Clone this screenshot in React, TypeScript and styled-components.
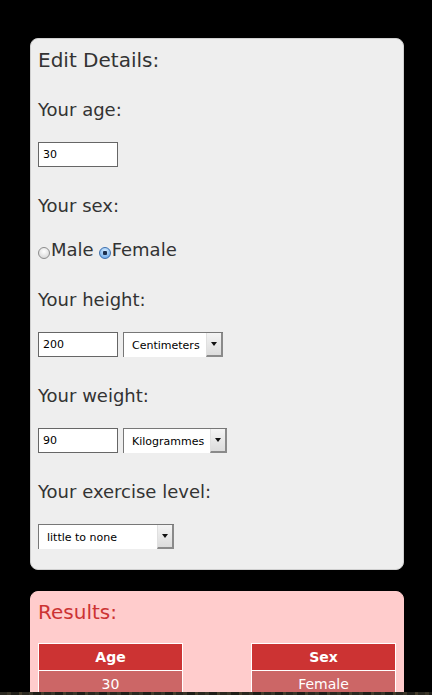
import styled, { createGlobalStyle } from "styled-components";

const GlobalStyle = createGlobalStyle`
  body {
    margin: 0;
    background: #000;
    font-family: "DejaVu Sans", Verdana, sans-serif;
  }
`

const Page = styled.div`
  padding: 38px 0 40px 30px;
  display: flex;
  flex-direction: column;
  gap: 21px;
`

const Card = styled.div<{ $tone: "grey" | "pink" }>`
  width: 374px;
  box-sizing: border-box;
  border-radius: 8px;
  background: ${(p) => (p.$tone === "grey" ? "#eeeeee" : "#ffcccc")};
  border: 1px solid ${(p) => (p.$tone === "grey" ? "#cfcfcf" : "#ffcccc")};
  padding: ${(p) => (p.$tone === "grey" ? "9px 7px 20px 7px" : "8px 7px 19px 7px")};
`

const CardTitle = styled.h2<{ $red?: boolean }>`
  margin: 0;
  font-size: 20px;
  line-height: 24px;
  font-weight: normal;
  color: ${(p) => (p.$red ? "#cc3333" : "#333")};
`

const Fields = styled.div`
  display: flex;
  flex-direction: column;
  gap: 28px;
  margin-top: 27px;
`

const Field = styled.div`
  display: flex;
  flex-direction: column;
  gap: 21px;
`

const Label = styled.div`
  font-size: 18px;
  line-height: 22px;
  color: #333;
`

const Controls = styled.div`
  display: flex;
  gap: 5px;
  align-items: center;
`

const TextInput = styled.input`
  width: 80px;
  height: 25px;
  box-sizing: border-box;
  border: 1px solid #666;
  padding: 0 4px;
  font-family: "DejaVu Sans", Verdana, sans-serif;
  font-size: 11px;
  color: #000;
  background: #fff;
  outline: none;
`

const SelectBox = styled.div<{ $w: number }>`
  width: ${(p) => p.$w}px;
  height: 25px;
  box-sizing: border-box;
  display: flex;
  border: 1px solid #777;
  border-right: none;
  border-bottom: none;
  background: #fff;
`

const NativeSelect = styled.select`
  flex: 1;
  min-width: 0;
  appearance: none;
  border: none;
  background: transparent;
  padding: 0 0 0 8px;
  font-family: "DejaVu Sans", Verdana, sans-serif;
  font-size: 11px;
  color: #000;
  outline: none;
`

const Arrow = styled.div`
  width: 14px;
  background: linear-gradient(#f4f4f4, #dcdcdc);
  border-right: 2px solid #8a8a8a;
  border-bottom: 2px solid #8a8a8a;
  border-left: 1px solid #e0e0e0;
  display: flex;
  align-items: center;
  justify-content: center;

  &::after {
    content: "";
    border-left: 3px solid transparent;
    border-right: 3px solid transparent;
    border-top: 4px solid #111;
  }
`

const RadioRow = styled.div`
  display: flex;
  align-items: baseline;
  font-size: 18px;
  line-height: 22px;
  color: #333;
  gap: 5px;
  padding-top: 1px;
`

const RadioOption = styled.label`
  display: flex;
  align-items: center;
`

const Radio = styled.input`
  appearance: none;
  margin: 5px 1px 0 0;
  width: 12px;
  height: 12px;
  border-radius: 50%;
  border: 1px solid #8c8c8c;
  background: radial-gradient(circle at 50% 35%, #ffffff, #cfcfcf);
  box-sizing: border-box;

  &:checked {
    border-color: #3d6fae;
    background: radial-gradient(circle, #1c2f4e 0 2px, transparent 2.5px),
      radial-gradient(circle at 50% 30%, #d4ecff, #5c9ee6);
  }
`

const ResultsGrid = styled.div`
  display: grid;
  grid-template-columns: 145px 145px;
  justify-content: space-between;
  row-gap: 20px;
  margin: 19px 0 0 0;
`

const ResultTable = styled.table`
  width: 145px;
  border-collapse: collapse;
  border: 1px solid #fff;
  color: #fff;
  font-size: 14px;
  text-align: center;
`

const HeadCell = styled.th`
  height: 26px;
  padding: 0;
  background: #cc3333;
  border: 1px solid #fff;
  font-weight: bold;
`

const ValueCell = styled.td`
  height: 25px;
  padding: 0;
  background: #cc6666;
  border: 1px solid #fff;
`

const Ground = styled.div`
  position: fixed;
  left: 0;
  right: 0;
  bottom: 0;
  height: 3px;
  background: repeating-linear-gradient(90deg, #2a2820 0 7px, #3a3528 7px 11px, #1f1e18 11px 19px, #443c2a 19px 22px);
`

const results = [
  { title: "Age", value: "30" },
  { title: "Sex", value: "Female" },
  { title: "Height", value: "200 cm" },
  { title: "Weight", value: "90 kg" },
]

const App = () => {
  return (
    <>
      <GlobalStyle />
      <Page>
        <Card $tone="grey">
          <CardTitle>Edit Details:</CardTitle>
          <Fields>
            <Field>
              <Label>Your age:</Label>
              <Controls>
                <TextInput defaultValue="30" />
              </Controls>
            </Field>
            <Field>
              <Label>Your sex:</Label>
              <RadioRow>
                <RadioOption>
                  <Radio type="radio" name="sex" />Male
                </RadioOption>
                <RadioOption>
                  <Radio type="radio" name="sex" defaultChecked />Female
                </RadioOption>
              </RadioRow>
            </Field>
            <Field>
              <Label>Your height:</Label>
              <Controls>
                <TextInput defaultValue="200" />
                <SelectBox $w={100}>
                  <NativeSelect defaultValue="cm">
                    <option value="cm">Centimeters</option>
                    <option value="in">Inches</option>
                  </NativeSelect>
                  <Arrow />
                </SelectBox>
              </Controls>
            </Field>
            <Field>
              <Label>Your weight:</Label>
              <Controls>
                <TextInput defaultValue="90" />
                <SelectBox $w={104}>
                  <NativeSelect defaultValue="kg">
                    <option value="kg">Kilogrammes</option>
                    <option value="lb">Pounds</option>
                  </NativeSelect>
                  <Arrow />
                </SelectBox>
              </Controls>
            </Field>
            <Field>
              <Label>Your exercise level:</Label>
              <Controls>
                <SelectBox $w={136}>
                  <NativeSelect defaultValue="none">
                    <option value="none">little to none</option>
                    <option value="light">light</option>
                    <option value="moderate">moderate</option>
                    <option value="heavy">heavy</option>
                  </NativeSelect>
                  <Arrow />
                </SelectBox>
              </Controls>
            </Field>
          </Fields>
        </Card>
        <Card $tone="pink">
          <CardTitle $red>Results:</CardTitle>
          <ResultsGrid>
            {results.map((r) => (
              <ResultTable key={r.title}>
                <thead>
                  <tr><HeadCell>{r.title}</HeadCell></tr>
                </thead>
                <tbody>
                  <tr><ValueCell>{r.value}</ValueCell></tr>
                </tbody>
              </ResultTable>
            ))}
          </ResultsGrid>
        </Card>
      </Page>
      <Ground />
    </>
  )
}

export default App
